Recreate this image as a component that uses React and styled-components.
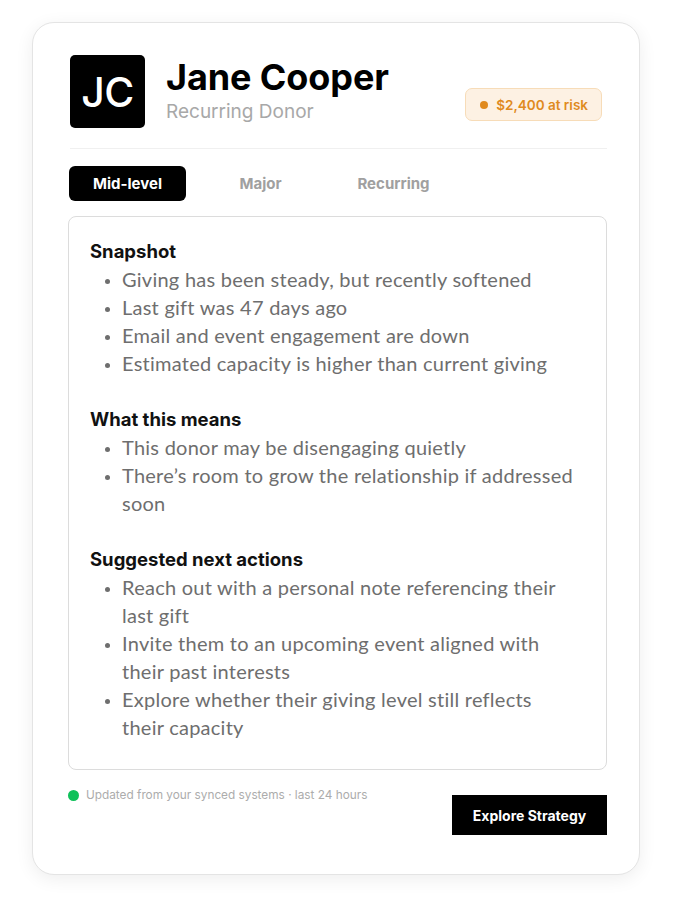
import React from 'react'
import styled, { createGlobalStyle } from 'styled-components'

const GlobalStyle = createGlobalStyle`
  * { box-sizing: border-box; }
  body {
    margin: 0;
    background: #fff;
    font-family: "Inter", "Liberation Sans", sans-serif;
  }
`

const sections = [
    {
        title: 'Snapshot',
        items: [
            'Giving has been steady, but recently softened',
            'Last gift was 47 days ago',
            'Email and event engagement are down',
            'Estimated capacity is higher than current giving',
        ],
    },
    {
        title: 'What this means',
        items: [
            'This donor may be disengaging quietly',
            'There’s room to grow the relationship if addressed soon',
        ],
    },
    {
        title: 'Suggested next actions',
        items: [
            'Reach out with a personal note referencing their last gift',
            'Invite them to an upcoming event aligned with their past interests',
            'Explore whether their giving level still reflects their capacity',
        ],
    },
]

const tabs = ['Mid-level', 'Major', 'Recurring']

const App = () => {
    return (
        <>
            <GlobalStyle />
            <Page>
                <Card>
                    <Header>
                        <Avatar>JC</Avatar>
                        <Identity>
                            <Name>Jane Cooper</Name>
                            <Role>Recurring Donor</Role>
                        </Identity>
                        <RiskBadge>
                            <Dot $color="#e08a1e" $size={8} />
                            $2,400 at risk
                        </RiskBadge>
                    </Header>
                    <Divider />
                    <Tabs>
                        {tabs.map((t, i) => (
                            <Tab key={t} $active={i === 0}>{t}</Tab>
                        ))}
                    </Tabs>
                    <Panel>
                        {sections.map((s) => (
                            <Section key={s.title}>
                                <SectionTitle>{s.title}</SectionTitle>
                                <List>
                                    {s.items.map((item) => (
                                        <li key={item}>{item}</li>
                                    ))}
                                </List>
                            </Section>
                        ))}
                    </Panel>
                    <Footer>
                        <SyncNote>
                            <Dot $color="#0fc15a" $size={11} />
                            Updated from your synced systems · last 24 hours
                        </SyncNote>
                        <ActionButton>Explore Strategy</ActionButton>
                    </Footer>
                </Card>
            </Page>
        </>
    )
}

export default App

const Page = styled.div`
  padding: 22px 35px 30px 32px;
`

const Card = styled.div`
  width: 608px;
  height: 853px;
  background: #fff;
  border: 1px solid #e4e4e4;
  border-radius: 22px;
  box-shadow: 0 4px 18px rgba(0, 0, 0, 0.07);
  padding: 32px 32px 0 37px;
`

const Header = styled.div`
  display: flex;
  align-items: flex-start;
  padding-right: 5px;
`

const Avatar = styled.div`
  width: 75px;
  height: 73px;
  border-radius: 5px;
  background: #000;
  color: #fff;
  display: flex;
  align-items: center;
  justify-content: center;
  font-size: 41px;
  font-weight: 500;
  letter-spacing: -0.5px;
  flex-shrink: 0;
`

const Identity = styled.div`
  margin-left: 21px;
  display: flex;
  flex-direction: column;
  flex: 1;
`

const Name = styled.div`
  font-size: 36px;
  font-weight: 700;
  color: #000;
  line-height: 44px;
  letter-spacing: -0.1px;
`

const Role = styled.div`
  font-size: 19px;
  color: #a8a8a8;
  line-height: 24px;
  margin-top: 1px;
`

const RiskBadge = styled.div`
  margin-top: 33px;
  display: flex;
  align-items: center;
  gap: 8px;
  height: 33px;
  padding: 0 13px 0 14px;
  background: #fdf1e3;
  border: 1px solid #f7dcb8;
  border-radius: 7px;
  color: #e08a1e;
  font-size: 13.5px;
  font-weight: 600;
`

const Dot = styled.span`
  display: inline-block;
  width: ${(p) => p.$size}px;
  height: ${(p) => p.$size}px;
  border-radius: 50%;
  background: ${(p) => p.$color};
  flex-shrink: 0;
`

const Divider = styled.div`
  height: 1px;
  background: #f0f0f0;
  margin: 20px 0 17px;
`

const Tabs = styled.div`
  display: flex;
  align-items: center;
  gap: 16px;
  margin-left: -1px;
`

const Tab = styled.div`
  width: 117px;
  height: 35px;
  display: flex;
  align-items: center;
  justify-content: center;
  border-radius: 6px;
  background: ${(p) => (p.$active ? '#000' : 'transparent')};
  color: ${(p) => (p.$active ? '#fff' : '#a0a0a0')};
  font-size: 15px;
  font-weight: 700;
`

const Panel = styled.div`
  margin-top: 15px;
  margin-left: -2px;
  border: 1px solid #dcdcdc;
  border-radius: 8px;
  padding: 20px 30px 28px 21px;
  display: flex;
  flex-direction: column;
  gap: 28px;
`

const Section = styled.div``

const SectionTitle = styled.div`
  font-size: 18.5px;
  font-weight: 700;
  color: #111;
  line-height: 28px;
`

const List = styled.ul`
  margin: 0;
  padding-left: 32px;
  font-family: "Lato", "Liberation Sans", sans-serif;
  font-size: 20px;
  letter-spacing: 0.25px;
  line-height: 28px;
  color: #6e6e6e;
  li::marker { font-size: 15px; }
`

const Footer = styled.div`
  display: flex;
  justify-content: space-between;
  align-items: flex-start;
  margin-top: 18px;
  margin-left: -1px;
`

const SyncNote = styled.div`
  display: flex;
  align-items: center;
  gap: 7px;
  font-size: 11.8px;
  color: #acacac;
  margin-left: -1px;
`

const ActionButton = styled.button`
  margin-top: 7px;
  width: 155px;
  height: 40px;
  border: none;
  background: #000;
  color: #fff;
  font-family: inherit;
  font-size: 14px;
  font-weight: 700;
  cursor: pointer;
`
